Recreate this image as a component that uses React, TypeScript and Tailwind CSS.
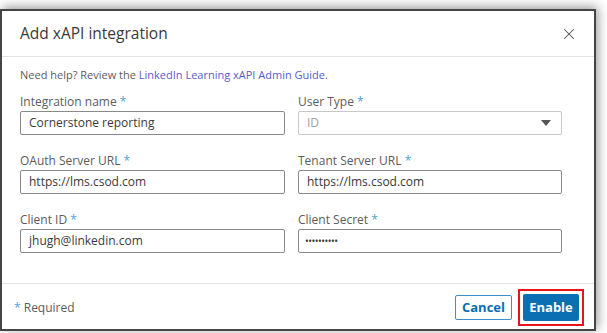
import { X } from 'lucide-react';

const font = { fontFamily: '"Open Sans", "Noto Sans", sans-serif' };

function Label({ text }: { text: string }) {
  return (
    <div className="h-[17px] text-[12px] leading-[16px] text-[#5c5c5c]">
      {text} <span className="text-[#4f9fd8]">*</span>
    </div>
  );
}

function Field({ label, value }: { label: string; value: string }) {
  return (
    <div className="flex flex-col">
      <Label text={label} />
      <div className="h-[24px] border border-[#8a8a8a] rounded-[2px] flex items-center px-[8px] text-[12px] text-[#3a3a3a]">
        {value}
      </div>
    </div>
  );
}

export default function App() {
  return (
    <div className="w-[607px] h-[333px] bg-white overflow-hidden pt-[9px]" style={font}>
      <div className="w-[596px] h-[322px] border-2 border-[#454545] bg-white flex flex-col shadow-[2px_-2px_10px_rgba(0,0,0,0.4)]">
        <div className="h-[46px] flex items-center justify-between pl-[18px] pr-[16px] border-b border-[#e3e3e3]">
          <h1 className="text-[15.5px] text-[#3a3a3a]">Add xAPI integration</h1>
          <X className="w-[18px] h-[18px] text-[#555]" strokeWidth={1.4} />
        </div>

        <div className="flex-1 px-[18px] pt-[10px] border-b border-[#e3e3e3]">
          <p className="text-[11px] leading-[16px] text-[#5c5c5c] mb-[11px]">
            Need help? Review the{' '}
            <span className="text-[#5b5bd0]">LinkedIn Learning xAPI Admin Guide.</span>
          </p>

          <div className="grid grid-cols-[265px_264px] gap-x-[13px] gap-y-[18px]">
            <Field label="Integration name" value="Cornerstone reporting" />
            <div className="flex flex-col">
              <Label text="User Type" />
              <div className="h-[24px] border border-[#c8c8c8] rounded-[2px] flex items-center justify-between pl-[8px] pr-[10px] text-[12px] text-[#a0a0a0]">
                <span>ID</span>
                <svg width="10" height="6" viewBox="0 0 10 6">
                  <path d="M0 0 L10 0 L5 6 Z" fill="#555" />
                </svg>
              </div>
            </div>
            <Field label="OAuth Server URL" value="https://lms.csod.com" />
            <Field label="Tenant Server URL" value="https://lms.csod.com" />
            <Field label="Client ID" value="jhugh@linkedin.com" />
            <div className="flex flex-col">
              <Label text="Client Secret" />
              <div className="h-[24px] border border-[#8a8a8a] rounded-[2px] flex items-center px-[6px] text-[10px] tracking-[-0.5px] text-[#333]">
                ••••••••••
              </div>
            </div>
          </div>
        </div>

        <div className="h-[45px] flex items-center justify-between pl-[12px] pr-[10px] pt-[2px]">
          <div className="text-[12px] text-[#5c5c5c]">
            <span className="text-[#4f9fd8]">*</span> Required
          </div>
          <div className="flex items-center gap-[6px]">
            <button className="w-[57px] h-[25px] border border-[#3d8fcc] text-[#0a6eb4] font-bold text-[13px] rounded-[2px]">
              Cancel
            </button>
            <span className="border-2 border-[#e8141c] p-[3px] flex">
              <button className="w-[56px] h-[27px] bg-[#0a70b3] text-white font-bold text-[13px] rounded-[2px]">
                Enable
              </button>
            </span>
          </div>
        </div>
      </div>
    </div>
  );
}
